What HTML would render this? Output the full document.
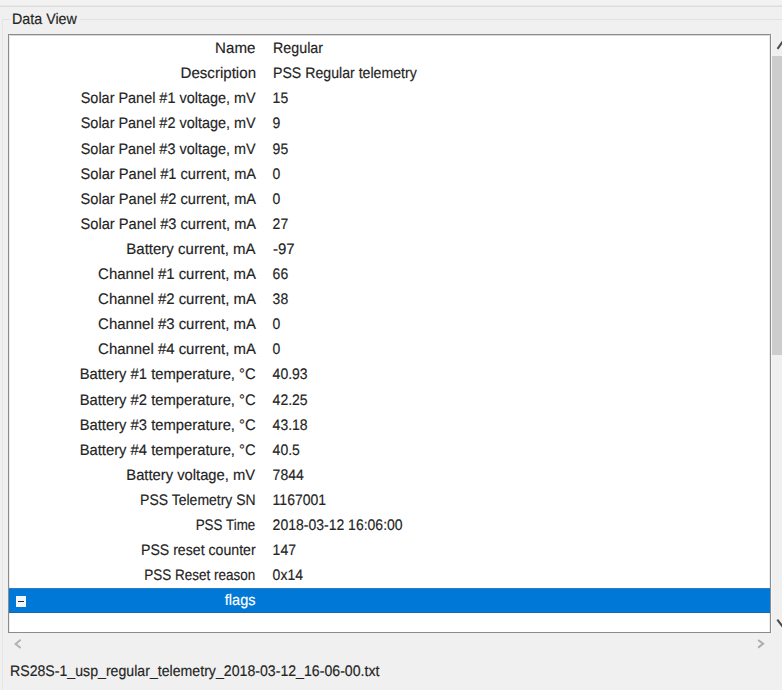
<!DOCTYPE html>
<html><head><meta charset="utf-8"><style>
html,body{margin:0;padding:0;}
body{width:782px;height:690px;background:#f0f0f0;position:relative;overflow:hidden;font-family:"Liberation Sans",sans-serif;font-size:14px;color:#242424;text-rendering:geometricPrecision;-webkit-text-stroke-width:0.15px;}
.a{position:absolute;}
.l{position:absolute;right:526.40px;line-height:16px;white-space:nowrap;transform-origin:100% 13px;}
.v{position:absolute;left:272.6px;line-height:16px;white-space:nowrap;transform-origin:0 13px;}
</style></head><body>
<div class="a" style="left:0;top:0;width:782px;height:5px;background:#f2f2f2"></div>
<div class="a" style="left:0;top:5px;width:782px;height:1px;background:#e8e8e8"></div>
<div class="a" style="left:0;top:6px;width:782px;height:1px;background:#dddddd"></div>
<div class="a" style="left:2px;top:19px;width:780px;height:680px;border-left:1px solid #e6e6e6;border-top:1px solid #e2e2e2"></div>
<div class="a" style="left:10px;width:70px;height:16px;background:#f0f0f0;top:10.90px"></div>
<div class="a" style="left:12.2px;line-height:16px;white-space:nowrap;top:10.90px;transform:scale(1.02,1.09);transform-origin:0 13px">Data View</div>
<div class="a" style="left:8px;top:34px;width:761px;height:597px;border:1px solid #8c8c8c;background:#fff"></div>
<div class="a" style="left:771px;top:34px;width:1px;height:599px;background:#f7f7f7"></div>
<div class="a" style="left:9px;top:35px;width:761px;height:1px;background:#d8d8d8"></div>
<div class="a" style="left:769px;top:35px;width:1px;height:597px;background:#ececec"></div>
<div class="a" style="left:9px;top:35px;width:1px;height:597px;background:#ececec"></div>
<div class="l" style="top:40.10px;transform:scale(1.078,1.09)">Name</div><div class="v" style="top:40.10px;transform:scale(1.02,1.09)">Regular</div><div class="l" style="top:65.20px;transform:scale(1.079,1.09)">Description</div><div class="v" style="top:65.20px;transform:scale(1.01,1.09)">PSS Regular telemetry</div><div class="l" style="top:90.30px;transform:scale(1.031,1.09)">Solar Panel #1 voltage, mV</div><div class="v" style="top:90.30px;transform:scale(1,1.09)">15</div><div class="l" style="top:115.40px;transform:scale(1.031,1.09)">Solar Panel #2 voltage, mV</div><div class="v" style="top:115.40px;transform:scale(1,1.09)">9</div><div class="l" style="top:140.50px;transform:scale(1.031,1.09)">Solar Panel #3 voltage, mV</div><div class="v" style="top:140.50px;transform:scale(1,1.09)">95</div><div class="l" style="top:165.60px;transform:scale(1.044,1.09)">Solar Panel #1 current, mA</div><div class="v" style="top:165.60px;transform:scale(1,1.09)">0</div><div class="l" style="top:190.70px;transform:scale(1.044,1.09)">Solar Panel #2 current, mA</div><div class="v" style="top:190.70px;transform:scale(1,1.09)">0</div><div class="l" style="top:215.80px;transform:scale(1.044,1.09)">Solar Panel #3 current, mA</div><div class="v" style="top:215.80px;transform:scale(1,1.09)">27</div><div class="l" style="top:240.90px;transform:scale(1.072,1.09)">Battery current, mA</div><div class="v" style="top:240.90px;transform:scale(1.07,1.09)">-97</div><div class="l" style="top:266.00px;transform:scale(1.067,1.09)">Channel #1 current, mA</div><div class="v" style="top:266.00px;transform:scale(1,1.09)">66</div><div class="l" style="top:291.10px;transform:scale(1.067,1.09)">Channel #2 current, mA</div><div class="v" style="top:291.10px;transform:scale(1,1.09)">38</div><div class="l" style="top:316.20px;transform:scale(1.067,1.09)">Channel #3 current, mA</div><div class="v" style="top:316.20px;transform:scale(1,1.09)">0</div><div class="l" style="top:341.30px;transform:scale(1.067,1.09)">Channel #4 current, mA</div><div class="v" style="top:341.30px;transform:scale(1,1.09)">0</div><div class="l" style="top:366.40px;transform:scale(1.056,1.09)">Battery #1 temperature, °C</div><div class="v" style="top:366.40px;transform:scale(1,1.09)">40.93</div><div class="l" style="top:391.50px;transform:scale(1.056,1.09)">Battery #2 temperature, °C</div><div class="v" style="top:391.50px;transform:scale(1,1.09)">42.25</div><div class="l" style="top:416.60px;transform:scale(1.056,1.09)">Battery #3 temperature, °C</div><div class="v" style="top:416.60px;transform:scale(1,1.09)">43.18</div><div class="l" style="top:441.70px;transform:scale(1.056,1.09)">Battery #4 temperature, °C</div><div class="v" style="top:441.70px;transform:scale(1,1.09)">40.5</div><div class="l" style="top:466.80px;transform:scale(1.055,1.09)">Battery voltage, mV</div><div class="v" style="top:466.80px;transform:scale(1,1.09)">7844</div><div class="l" style="top:491.90px;transform:scale(0.999,1.09)">PSS Telemetry SN</div><div class="v" style="top:491.90px;transform:scale(1,1.09)">1167001</div><div class="l" style="top:517.00px;transform:scale(0.957,1.09)">PSS Time</div><div class="v" style="top:517.00px;transform:scale(1,1.09)">2018-03-12 16:06:00</div><div class="l" style="top:542.10px;transform:scale(1.009,1.09)">PSS reset counter</div><div class="v" style="top:542.10px;transform:scale(1,1.09)">147</div><div class="l" style="top:567.20px;transform:scale(0.964,1.09)">PSS Reset reason</div><div class="v" style="top:567.20px;transform:scale(1,1.09)">0x14</div>
<div class="a" style="left:9px;top:588px;width:761px;height:1px;background:#2a7fc4"></div>
<div class="a" style="left:9px;top:589px;width:761px;height:23px;background:#0078d7"></div>
<div class="a" style="left:9px;top:612px;width:761px;height:1px;background:#1569ad"></div>
<div class="a" style="left:16px;top:595.6px;width:10px;height:11px;background:#f2f6fb"></div>
<div class="a" style="left:18.2px;top:600.8px;width:5.6px;height:1.2px;background:#2a2a2a"></div>
<div class="l" style="top:592.20px;color:#fff;transform:scale(1.041,1.09)">flags</div>
<div class="a" style="left:772px;top:56px;width:12px;height:299.4px;background:#cdcdcd"></div>
<svg class="a" style="left:0;top:0" width="782" height="690" viewBox="0 0 782 690">
<polyline points="777.5,48.8 783.5,40.3 789.5,48.8" fill="none" stroke="#4a4a4a" stroke-width="2"/>
<polyline points="777.3,619.6 783.5,627.7 789.7,619.6" fill="none" stroke="#4a4a4a" stroke-width="2"/>
<polyline points="20.6,639.8 15.6,643.9 20.6,648" fill="none" stroke="#b2b2b2" stroke-width="2"/>
<polyline points="758.2,640 763.1,643.8 758.2,647.6" fill="none" stroke="#acacac" stroke-width="2"/>
</svg>
<div class="a" style="left:10px;top:662.70px;line-height:16px;white-space:nowrap;transform:scale(1.01,1.09);transform-origin:0 13px">RS28S-1_usp_regular_telemetry_2018-03-12_16-06-00.txt</div>
</body></html>
